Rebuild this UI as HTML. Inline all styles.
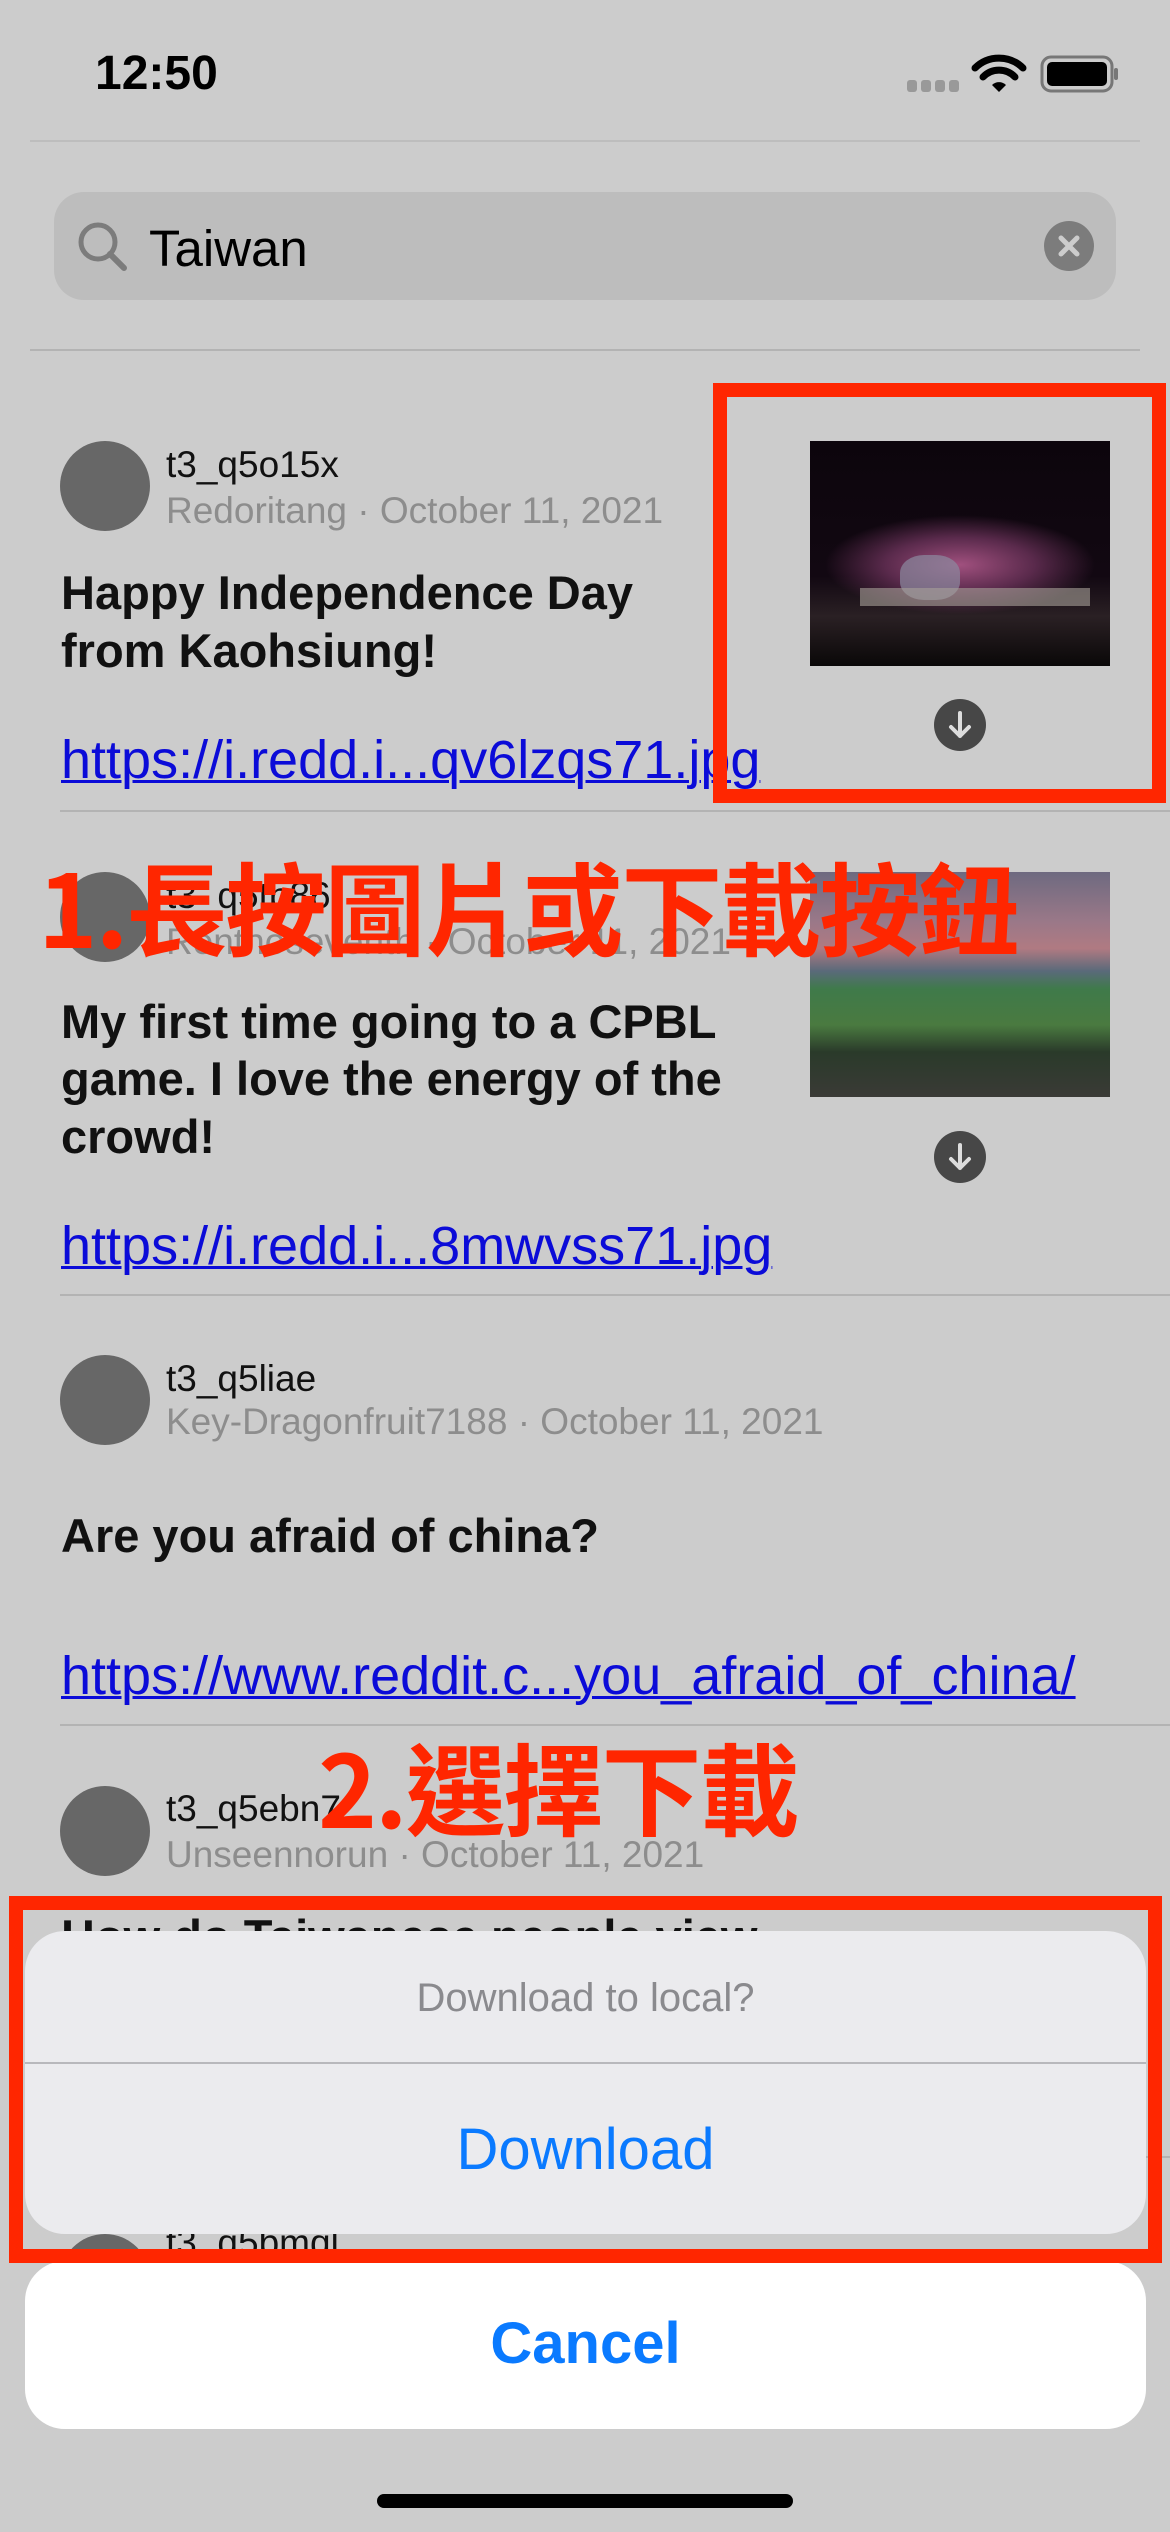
<!DOCTYPE html>
<html><head><meta charset="utf-8"><style>
*{margin:0;padding:0;box-sizing:border-box}
body{width:1170px;height:2532px;background:#cccccc;position:relative;overflow:hidden;font-family:"Liberation Sans","Noto Sans CJK TC",sans-serif}
.a{position:absolute;white-space:nowrap;line-height:1}
.hr{position:absolute;height:2px;background:#b3b3b3}
.av{position:absolute;left:60px;width:90px;height:90px;border-radius:50%;background:#676767}
.id{font-size:37px;color:#111;left:166px}
.meta{font-size:37px;color:#8d8d8d;left:166px}
.tt{font-size:47px;font-weight:bold;color:#111;left:61px}
.ln{font-size:54px;color:#0b0bd8;text-decoration:underline;text-decoration-thickness:3px;left:61px}
.dl{position:absolute;left:934px;width:52px;height:52px;border-radius:50%;background:#474747}
.red{font-weight:bold;color:#ff2600;font-family:"Noto Sans CJK TC","Liberation Sans",sans-serif}
</style></head><body>
<div class="a" style="left:95px;top:50px;font-size:48px;font-weight:bold;color:#000">12:50</div>
<svg class="a" style="left:905px;top:50px" width="215" height="48" viewBox="0 0 215 48">
<rect x="2" y="30" width="10" height="12" rx="3" fill="#999"/><rect x="16" y="30" width="10" height="12" rx="3" fill="#999"/><rect x="30" y="30" width="10" height="12" rx="3" fill="#999"/><rect x="44" y="30" width="10" height="12" rx="3" fill="#999"/>
<path d="M70 18 A34 34 0 0 1 118 18" stroke="#000" stroke-width="7" fill="none" stroke-linecap="round"/>
<path d="M78 27 A22 22 0 0 1 110 27" stroke="#000" stroke-width="7" fill="none" stroke-linecap="round"/>
<path d="M87 35 L94 42 L101 35 A10 10 0 0 0 87 35Z" fill="#000"/>
<rect x="137" y="7" width="70" height="34" rx="9" stroke="#777" stroke-width="3" fill="none"/>
<rect x="142" y="12" width="60" height="24" rx="5" fill="#000"/>
<rect x="209" y="18" width="4" height="12" rx="2" fill="#777"/>
</svg>
<div class="hr" style="left:30px;width:1110px;top:140px;background:#bdbdbd"></div>
<div class="a" style="left:54px;top:192px;width:1062px;height:108px;border-radius:30px;background:#bdbdbd"></div>
<svg class="a" style="left:76px;top:220px" width="54" height="54" viewBox="0 0 54 54"><circle cx="22" cy="22" r="17" stroke="#7c7c7c" stroke-width="5" fill="none"/><path d="M34 34 L48 48" stroke="#7c7c7c" stroke-width="6" stroke-linecap="round"/></svg>
<div class="a" style="left:149px;top:223px;font-size:51px;color:#000">Taiwan</div>
<svg class="a" style="left:1044px;top:221px" width="50" height="50" viewBox="0 0 50 50"><circle cx="25" cy="25" r="25" fill="#7c7c7c"/><path d="M17 17L33 33M33 17L17 33" stroke="#ccc" stroke-width="5" stroke-linecap="round"/></svg>
<div class="hr" style="left:30px;width:1110px;top:349px"></div>

<!-- post 1 -->
<div class="av" style="top:441px"></div>
<div class="a id" style="top:446px">t3_q5o15x</div>
<div class="a meta" style="top:492px">Redoritang · October 11, 2021</div>
<div class="a tt" style="top:569px">Happy Independence Day</div>
<div class="a tt" style="top:627px">from Kaohsiung!</div>
<div class="a ln" style="top:733px">https://i.redd.i...qv6lzqs71.jpg</div>
<div class="a" style="left:810px;top:441px;width:300px;height:225px;background:radial-gradient(ellipse 45% 22% at 50% 55%,#a0507e,#5a2a4c 55%,transparent 100%),linear-gradient(#0c050c 0,#120812 60%,#2a2024 78%,#0a0808 100%)"></div>
<div class="a" style="left:900px;top:555px;width:60px;height:45px;border-radius:40%;background:#8c8aa0;opacity:.7"></div>
<div class="a" style="left:860px;top:588px;width:230px;height:18px;background:#a8a29a;opacity:.6"></div>
<div class="dl" style="top:699px"></div>
<svg class="a" style="left:934px;top:699px" width="52" height="52"><path d="M26 14V37M17 28L26 37L35 28" stroke="#ddd" stroke-width="4" fill="none" stroke-linecap="round" stroke-linejoin="round"/></svg>
<div class="hr" style="left:60px;width:1110px;top:810px"></div>

<!-- post 2 -->
<div class="av" style="top:872px"></div>
<div class="a id" style="top:877px">t3_q5tb86</div>
<div class="a meta" style="top:923px">Renthoseventh · October 11, 2021</div>
<div class="a" style="left:810px;top:872px;width:300px;height:225px;background:linear-gradient(#6e6a80 0,#9a7888 22%,#b07a82 34%,#5a6a7a 44%,#3f7a4a 52%,#4a7a40 68%,#2a3a2a 80%,#3a3a36 100%)"></div>
<div class="a tt" style="top:998px">My first time going to a CPBL</div>
<div class="a tt" style="top:1055px">game. I love the energy of the</div>
<div class="a tt" style="top:1113px">crowd!</div>
<div class="dl" style="top:1131px"></div>
<svg class="a" style="left:934px;top:1131px" width="52" height="52"><path d="M26 14V37M17 28L26 37L35 28" stroke="#ddd" stroke-width="4" fill="none" stroke-linecap="round" stroke-linejoin="round"/></svg>
<div class="a ln" style="top:1219px">https://i.redd.i...8mwvss71.jpg</div>
<div class="hr" style="left:60px;width:1110px;top:1294px"></div>

<!-- post 3 -->
<div class="av" style="top:1355px"></div>
<div class="a id" style="top:1360px">t3_q5liae</div>
<div class="a meta" style="top:1403px">Key-Dragonfruit7188 · October 11, 2021</div>
<div class="a tt" style="top:1512px">Are you afraid of china?</div>
<div class="a ln" style="top:1649px">https://www.reddit.c...you_afraid_of_china/</div>
<div class="hr" style="left:60px;width:1110px;top:1724px"></div>

<!-- post 4 -->
<div class="av" style="top:1786px"></div>
<div class="a id" style="top:1790px">t3_q5ebn7</div>
<div class="a meta" style="top:1836px">Unseennorun · October 11, 2021</div>
<div class="a tt" style="top:1913px">How do Taiwanese people view</div>
<div class="hr" style="left:1140px;width:30px;top:2156px"></div>
<div class="av" style="top:2234px"></div>
<div class="a id" style="top:2224px">t3_q5bmql</div>

<!-- annotations text -->
<div class="a red" style="left:38px;top:855px;font-size:101px;letter-spacing:-2px">1.長按圖片或下載按鈕</div>
<div class="a red" style="left:318px;top:1735px;font-size:100px;letter-spacing:-2px">2.選擇下載</div>

<!-- action sheet -->
<div class="a" style="left:25px;top:1931px;width:1121px;height:303px;border-radius:40px;background:#ebebee"></div>
<div class="a" style="left:25px;top:1978px;width:1121px;text-align:center;font-size:40px;color:#8a8a8e">Download to local?</div>
<div class="a" style="left:25px;top:2062px;width:1121px;height:2px;background:#b8b8bc"></div>
<div class="a" style="left:25px;top:2121px;width:1121px;text-align:center;font-size:58px;color:#0a7aff">Download</div>
<div class="a" style="left:25px;top:2261px;width:1121px;height:168px;border-radius:40px;background:#fff"></div>
<div class="a" style="left:25px;top:2315px;width:1121px;text-align:center;font-size:58px;font-weight:bold;color:#0a7aff">Cancel</div>
<div class="a" style="left:377px;top:2494px;width:416px;height:14px;border-radius:7px;background:#000"></div>

<!-- red boxes -->
<div class="a" style="left:713px;top:383px;width:453px;height:420px;border:14px solid #ff2600"></div>
<div class="a" style="left:9px;top:1896px;width:1153px;height:367px;border:14px solid #ff2600"></div>
</body></html>
